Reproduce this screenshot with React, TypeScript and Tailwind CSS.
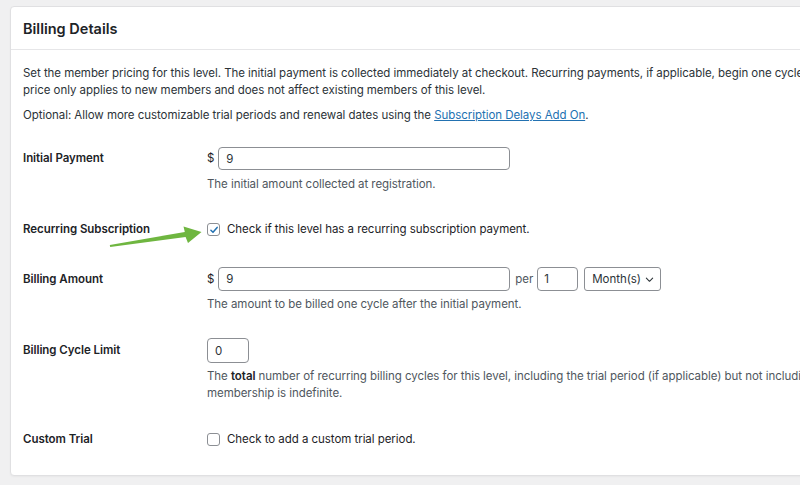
import { useState } from "react";

function Checkbox({ checked, onChange }: { checked: boolean; onChange: () => void }) {
  return (
    <button
      type="button"
      onClick={onChange}
      className="flex h-[13px] w-[13px] shrink-0 items-center justify-center rounded-[3px] border border-[#8c8f94] bg-white"
    >
      {checked && (
        <svg viewBox="0 0 12 12" className="h-[10px] w-[10px]">
          <path d="M2.3 6.3 4.8 8.8 9.8 2.9" fill="none" stroke="#2271b1" strokeWidth="1.8" strokeLinecap="round" strokeLinejoin="round" />
        </svg>
      )}
    </button>
  );
}

function Row({
  label,
  height,
  top,
  children,
  description,
}: {
  label: string;
  height: number;
  top: string;
  children: React.ReactNode;
  description?: React.ReactNode;
}) {
  return (
    <div className={`flex ${top}`}>
      <div className="flex w-[184px] shrink-0 items-center font-semibold text-[#1d2327]" style={{ height }}>
        {label}
      </div>
      <div className="flex-1">
        <div className="flex items-center" style={{ height }}>
          {children}
        </div>
        {description}
      </div>
    </div>
  );
}

export default function App() {
  const [recurring, setRecurring] = useState(true);
  const [trial, setTrial] = useState(false);

  return (
    <div
      className="relative h-[485px] w-[800px] overflow-hidden bg-[#f0f0f1] pl-[10px] pt-[6px] text-[11.5px] leading-[17px] tracking-[-0.05px] text-[#1d2327]"
      style={{ fontFamily: "Inter, 'Noto Sans', sans-serif" }}
    >
      <div className="w-[840px] rounded-[4px] border border-[#e0e0e2] bg-white shadow-[0_1px_2px_rgba(0,0,0,0.04)]">
        <div className="flex h-[43px] items-center border-b border-[#e6e6e8] px-[12px]">
          <h2 className="text-[14.5px] font-semibold tracking-normal text-[#1d2327]">Billing Details</h2>
        </div>

        <div className="px-[12px] pb-[27px] pt-[15px]">
          <p className="whitespace-nowrap text-[#2c3338]">
            Set the member pricing for this level. The initial payment is collected immediately at checkout. Recurring payments, if applicable, begin one cycle after the initial payment. Changing the level
            <br />
            price only applies to new members and does not affect existing members of this level.
          </p>
          <p className="mt-[8px] text-[#2c3338]">
            Optional: Allow more customizable trial periods and renewal dates using the{" "}
            <a href="#" className="text-[#2271b1] underline">
              Subscription Delays Add On
            </a>
            .
          </p>

          <Row
            label="Initial Payment"
            height={23}
            top="mt-[23px]"
            description={<p className="mt-[5.5px] text-[#50575e]">The initial amount collected at registration.</p>}
          >
            <span className="mr-[4px]">$</span>
            <input
              defaultValue="9"
              className="h-[23px] w-[292px] rounded-[4px] border border-[#8c8f94] bg-white px-[7px] text-[#2c3338] outline-none"
            />
          </Row>

          <Row label="Recurring Subscription" height={17} top="mt-[28.5px]">
            <Checkbox checked={recurring} onChange={() => setRecurring(!recurring)} />
            <span className="ml-[7px]">Check if this level has a recurring subscription payment.</span>
          </Row>

          <Row
            label="Billing Amount"
            height={24}
            top="mt-[29px]"
            description={<p className="mt-[4.5px] text-[#50575e]">The amount to be billed one cycle after the initial payment.</p>}
          >
            <span className="mr-[4px]">$</span>
            <input
              defaultValue="9"
              className="h-[24px] w-[292px] rounded-[4px] border border-[#8c8f94] bg-white px-[7px] text-[#2c3338] outline-none"
            />
            <span className="ml-[5px] mr-[4px] text-[#50575e]">per</span>
            <input
              defaultValue="1"
              className="h-[24px] w-[41px] rounded-[4px] border border-[#8c8f94] bg-white px-[6px] text-[#2c3338] outline-none"
            />
            <button
              type="button"
              className="ml-[6px] flex h-[24px] w-[77px] items-center justify-between rounded-[3px] border border-[#8c8f94] bg-white pl-[7px] pr-[6px] text-[#2c3338]"
            >
              Month(s)
              <svg viewBox="0 0 10 10" className="h-[9px] w-[9px]">
                <path d="M1.5 3.5 5 7 8.5 3.5" fill="none" stroke="#2c3338" strokeWidth="1.2" strokeLinecap="round" strokeLinejoin="round" />
              </svg>
            </button>
          </Row>

          <Row
            label="Billing Cycle Limit"
            height={25}
            top="mt-[25.5px]"
            description={
              <p className="mt-[4.5px] whitespace-nowrap text-[#50575e]">
                The <strong className="font-semibold text-[#1d2327]">total</strong> number of recurring billing cycles for this level, including the trial period (if applicable) but not including the initial payment. Set to zero if
                <br />
                membership is indefinite.
              </p>
            }
          >
            <input
              defaultValue="0"
              className="h-[25px] w-[42px] rounded-[4px] border border-[#8c8f94] bg-white px-[7px] text-[#2c3338] outline-none"
            />
          </Row>

          <Row label="Custom Trial" height={17} top="mt-[29px]">
            <Checkbox checked={trial} onChange={() => setTrial(!trial)} />
            <span className="ml-[7px]">Check to add a custom trial period.</span>
          </Row>
        </div>
      </div>

      {/* annotation arrow pointing at the recurring checkbox */}
      <svg className="pointer-events-none absolute left-0 top-0" width="800" height="485">
        <polygon
          points="109.8,245 184.8,231.9 183.5,226.5 201.5,232 188,243 185.6,236.9 110.2,247"
          fill="#6fb640"
        />
      </svg>
    </div>
  );
}
